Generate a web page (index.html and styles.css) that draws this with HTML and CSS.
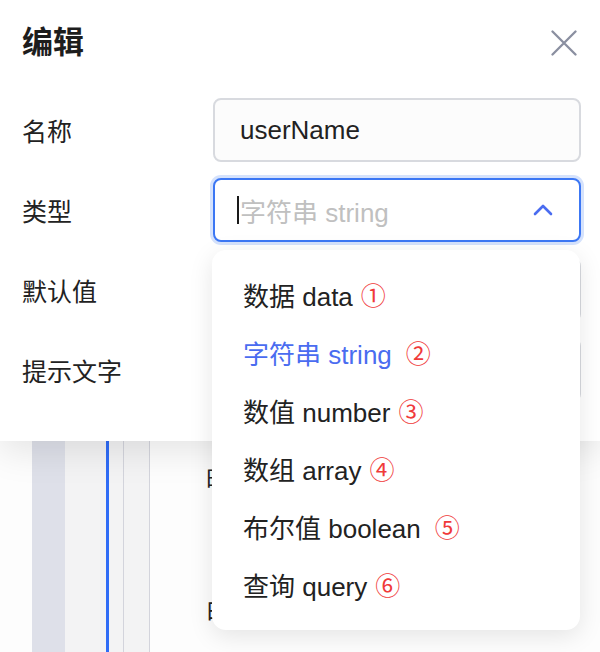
FILE: index.html
```html
<!DOCTYPE html>
<html lang="zh-CN">
<head>
<meta charset="utf-8">
<title>编辑</title>
<link rel="stylesheet" href="styles.css">
</head>
<body>
<div class="page">
  <div class="strip gutter"></div>
  <div class="strip side"></div>
  <div class="strip pane"></div>
  <div class="strip active-line"></div>
  <div class="strip pane narrow"></div>
  <div class="strip divider"></div>
  <div class="strip pane mid"></div>
  <div class="strip divider"></div>
  <div class="content">
    <div class="content-line first">时</div>
    <div class="content-line second">由</div>
  </div>
</div>

<div class="modal">
  <div class="modal-header">
    <h1 class="modal-title">编辑</h1>
    <button class="close-btn" aria-label="关闭">
      <svg width="26" height="26" viewBox="0 0 26 26"><path d="M1.5 1.5L24.5 24.5M24.5 1.5L1.5 24.5" stroke="#8a8fa0" stroke-width="2.3" stroke-linecap="round" fill="none"/></svg>
    </button>
  </div>
  <div class="form">
    <label class="form-label">名称</label>
    <div class="input"><span class="value">userName</span></div>

    <label class="form-label">类型</label>
    <div class="input focused">
      <span class="caret"></span><span class="placeholder">字符串 string</span>
      <svg class="chevron" width="20" height="12" viewBox="0 0 20 12"><path d="M2 10L10 2L18 10" stroke="#4a6cf0" stroke-width="2.6" stroke-linecap="round" stroke-linejoin="round" fill="none"/></svg>
    </div>

    <label class="form-label">默认值</label>
    <div class="input"></div>

    <label class="form-label">提示文字</label>
    <div class="input"></div>
  </div>
</div>

<ul class="dropdown">
  <li class="option">数据 data<span class="num">①</span></li>
  <li class="option selected">字符串 string<span class="num wide">②</span></li>
  <li class="option">数值 number<span class="num">③</span></li>
  <li class="option">数组 array<span class="num">④</span></li>
  <li class="option">布尔值 boolean<span class="num wide">⑤</span></li>
  <li class="option">查询 query<span class="num">⑥</span></li>
</ul>
</body>
</html>
```

FILE: styles.css
```css
* { box-sizing: border-box; }
html, body {
  margin: 0;
  padding: 0;
  width: 600px;
  height: 652px;
  overflow: hidden;
  font-family: "Liberation Sans", "Noto Sans CJK SC", sans-serif;
  color: #222;
  background: #fff;
}

/* underlying page */
.page {
  display: flex;
  height: 652px;
  background: #fdfdfd;
}
.strip { height: 100%; flex: none; }
.gutter { width: 32px; background: #fdfdfd; }
.side { width: 33px; background: #dee0e9; }
.pane { width: 41px; background: #f3f3f4; }
.pane.narrow { width: 14px; }
.pane.mid { width: 25px; }
.active-line { width: 3px; background: #2f6cf6; }
.divider { width: 1px; background: #d3d4dc; }
.content {
  flex: 1;
  padding-left: 56px;
  font-size: 24px;
  line-height: 30px;
  color: #222;
}
.content-line.first { margin-top: 465px; }
.content-line.second { margin-top: 100px; }

/* modal */
.modal {
  position: absolute;
  left: 0;
  top: 0;
  width: 600px;
  height: 441px;
  background: #fff;
  box-shadow: 0 10px 34px rgba(0, 0, 0, 0.10);
  padding: 0 19px 0 22px;
}
.modal-header {
  display: flex;
  align-items: center;
  justify-content: space-between;
  height: 86px;
}
.modal-title {
  margin: 0;
  font-size: 31px;
  font-weight: 700;
  line-height: 40px;
  color: #1d1d1d;
}
.close-btn {
  border: 0;
  background: none;
  padding: 0;
  width: 26px;
  height: 26px;
  margin-right: 4px;
  display: flex;
}
.form {
  display: grid;
  grid-template-columns: 191px 1fr;
  row-gap: 16px;
  margin-top: 12px;
}
.form-label {
  display: flex;
  align-items: center;
  font-size: 25px;
  color: #222;
  height: 64px;
}
.input {
  height: 64px;
  border: 2px solid #d8dadf;
  border-radius: 8px;
  background: #fcfcfc;
  display: flex;
  align-items: center;
  padding-left: 25px;
  padding-right: 26px;
  font-size: 26px;
}
.input .value { color: #222; }
.input.focused {
  border-color: #3c77f4;
  background: #fff;
  box-shadow: 0 0 0 3px #d5e2fc;
  padding-left: 22px;
}
.caret {
  width: 2px;
  height: 28px;
  background: #1a1a1a;
  margin-right: 1px;
}
.placeholder { color: #c0c0c0; flex: 1; }
.chevron { flex: none; }

/* dropdown */
.dropdown {
  position: absolute;
  left: 212px;
  top: 250px;
  width: 368px;
  height: 380px;
  margin: 0;
  padding: 15px 0 0 31px;
  list-style: none;
  background: #fff;
  border-radius: 14px;
  box-shadow: 0 6px 24px rgba(0, 0, 0, 0.10);
}
.option {
  height: 58px;
  display: flex;
  align-items: center;
  font-size: 26px;
  color: #222;
  white-space: pre;
}
.option.selected { color: #4a6cf0; }
.num {
  color: #f03a3a;
  font-size: 25px;
  margin-left: 8px;
  font-family: "Noto Sans CJK SC", sans-serif;
}
.num.wide { margin-left: 14px; }
```
